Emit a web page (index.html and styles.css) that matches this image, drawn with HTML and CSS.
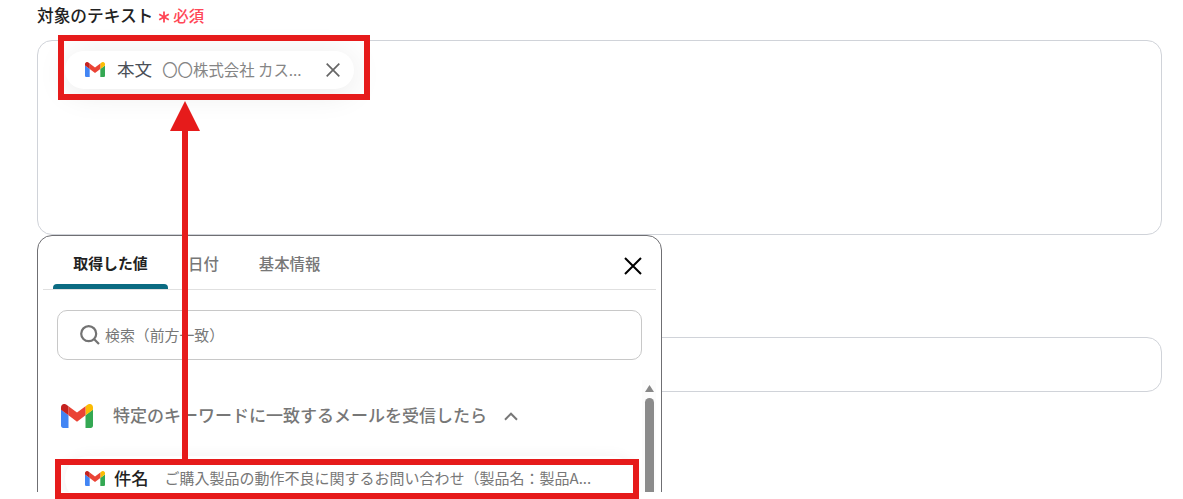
FILE: index.html
```html
<!DOCTYPE html>
<html lang="ja">
<head>
    <meta charset="UTF-8">
    <meta name="viewport" content="width=device-width, initial-scale=1.0">
    <title>対象のテキスト</title>
    <link rel="stylesheet" href="styles.css">
</head>
<body>
    <!-- shared logo -->
    <svg class="defs" width="0" height="0">
        <symbol id="gmail" viewBox="0 0 32 24">
            <path fill="#4285f4" d="M2.2 24H7.5V11.3L0 5.6V21.8C0 23 1 24 2.2 24z"/>
            <path fill="#34a853" d="M24.5 24h5.3c1.2 0 2.2-1 2.2-2.2V5.6l-7.5 5.7z"/>
            <path fill="#fbbc04" d="M24.5 2.2v9.1L32 5.7V3.3c0-2.8-3.3-4.3-5.5-2.6z"/>
            <path fill="#ea4335" d="M7.5 11.3V2.2L16 8.6l8.5-6.4v9.1L16 17.7z"/>
            <path fill="#c5221f" d="M0 3.3v2.4l7.5 5.6V2.2L5.5.7C3.2-1 0 .5 0 3.3z"/>
        </symbol>
    </svg>

    <div class="screen">
        <div class="label">対象のテキスト<svg class="asterisk" viewBox="0 0 12 12"><path d="M6 .5v11M1.2 3.2l9.6 5.6M10.8 3.2L1.2 8.8"/></svg><span class="required">必須</span></div>
        <div class="textarea">
            <div class="chip">
                <svg class="chip-logo"><use href="#gmail"/></svg>
                <span class="chip-name">本文</span>
                <span class="chip-value">〇〇株式会社 カス...</span>
                <svg class="chip-close" viewBox="0 0 14 14"><path d="M.7.7l12.6 12.6M13.3.7L.7 13.3"/></svg>
            </div>
        </div>
        <div class="input"></div>

        <div class="popup">
            <div class="tabs">
                <div class="tab active">取得した値</div>
                <div class="tab date">日付</div>
                <div class="tab">基本情報</div>
                <svg class="popup-close" viewBox="0 0 18 18"><path d="M1 1l16 16M17 1L1 17"/></svg>
            </div>
            <div class="search">
                <svg class="search-icon" viewBox="0 0 20 20"><circle cx="8.7" cy="8.7" r="7.5"/><path d="M14 14l5 5"/></svg>
                <span class="placeholder">検索（前方一致）</span>
            </div>
            <div class="results">
                <div class="list">
                    <div class="group">
                        <svg class="group-logo"><use href="#gmail"/></svg>
                        <span class="group-name">特定のキーワードに一致するメールを受信したら</span>
                        <svg class="chevron" viewBox="0 0 14 9"><path d="M1 7.7l6-6 6 6"/></svg>
                    </div>
                    <div class="item">
                        <svg class="item-logo"><use href="#gmail"/></svg>
                        <span class="item-name">件名</span>
                        <span class="item-value">ご購入製品の動作不良に関するお問い合わせ（製品名：製品A...</span>
                    </div>
                </div>
                <div class="scrollbar">
                    <svg class="scroll-up" viewBox="0 0 9 7"><path d="M4.5 0L9 7H0z"/></svg>
                    <div class="thumb"></div>
                </div>
            </div>
        </div>
    </div>

    <!-- annotations -->
    <div class="mark mark-target"></div>
    <div class="mark mark-source"></div>
    <svg class="arrow" viewBox="0 0 30 360"><path d="M15 0l15 30H18v330h-6V30H0z"/></svg>
</body>
</html>
```

FILE: styles.css
```css
* {
    box-sizing: border-box;
}
body {
    margin: 0;
    height: 499px;
    position: relative;
    overflow: hidden;
    background: #fff;
    font-family: "Noto Sans CJK JP", "Noto Sans", sans-serif;
    font-size: 15.4px;
    color: #222;
    white-space: nowrap;
}
svg {
    display: block;
    flex: none;
    fill: none;
}
.defs {
    position: absolute;
}
.screen {
    position: relative;
    height: 492px;
    padding: 0 21px 0 37px;
    overflow: hidden;
}
.label {
    display: flex;
    align-items: center;
    height: 32px;
    padding-bottom: 2px;
    font-size: 16.7px;
    font-weight: 500;
}
.asterisk {
    width: 12px;
    height: 12px;
    margin: 4px 3px 0 5px;
    stroke: #ff4757;
    stroke-width: 1.8;
}
.required {
    font-size: 15.4px;
    color: #ff4757;
}
.textarea {
    height: 195px;
    margin-top: 8px;
    padding: 10px 27px;
    border: 1px solid #d0d3d9;
    border-radius: 15px;
}
.input {
    height: 55px;
    margin-top: 102px;
    border: 1px solid #d0d3d9;
    border-radius: 15px;
}
.chip {
    display: flex;
    align-items: center;
    width: 289px;
    height: 38px;
    padding: 0 0 3px 20px;
    border-radius: 19px;
    background: #fff;
    box-shadow: 0 4px 32px rgba(0, 0, 0, 0.09);
}
.chip-logo, .item-logo {
    width: 20px;
    height: 15px;
}
.chip-logo {
    margin-top: 1px;
}
.chip-name {
    margin-left: 12px;
    font-size: 17.6px;
    color: #4b5058;
}
.chip-value {
    width: 164px;
    margin-left: 10px;
    color: #858585;
}
.chip-close {
    width: 14px;
    height: 14px;
    margin-top: 3px;
    stroke: #666;
    stroke-width: 1.7;
}

/* value picker */
.popup {
    position: absolute;
    left: 37px;
    top: 235px;
    width: 625px;
    height: 280px;
    padding: 0 5px;
    border: 1px solid #6f6f73;
    border-radius: 15px;
    background: #fff;
}
.tabs {
    display: flex;
    height: 54px;
    padding: 0 14.5px 0 10px;
    border-bottom: 1px solid #e0e0e0;
}
.tab {
    position: relative;
    display: flex;
    align-items: center;
    justify-content: center;
    font-weight: 500;
    color: #777;
}
.tab.active {
    width: 115px;
    color: #222;
    font-size: 14.9px;
    font-weight: 700;
}
.tab.active::after {
    content: "";
    position: absolute;
    left: 0;
    right: 0;
    bottom: 0;
    height: 5px;
    border-radius: 4px 4px 0 0;
    background: #0b6b82;
}
.tab.date {
    margin: 0 40px 0 20px;
}
.popup-close {
    width: 18px;
    height: 18px;
    margin: 20.5px 0 0 auto;
    stroke: #000;
    stroke-width: 2;
}
.search {
    display: flex;
    align-items: center;
    height: 50px;
    margin: 20px 14px 0;
    padding-left: 22px;
    border: 1px solid #c8c8c8;
    border-radius: 10px;
    font-size: 14.9px;
    color: #777;
}
.search-icon {
    width: 20px;
    height: 20px;
    margin-right: 5px;
    stroke: #737373;
    stroke-width: 2.2;
}
.placeholder {
    margin-bottom: 2px;
}
.results {
    display: flex;
    margin-top: 20px;
}
.list {
    width: 599px;
    flex: none;
    padding: 16px 0 0 18px;
}
.group {
    display: flex;
    align-items: center;
    height: 40px;
}
.group-logo {
    width: 32px;
    height: 24px;
}
.group-name {
    margin: 0 0 3px 20px;
    font-size: 17px;
    font-weight: 500;
    color: #777;
}
.chevron {
    width: 14px;
    height: 9px;
    margin-left: 17px;
    stroke: #777;
    stroke-width: 2;
}
.item {
    display: flex;
    align-items: center;
    width: 570px;
    height: 46px;
    margin: 20px 0 0 4px;
    padding: 0 0 3px 20px;
    border-radius: 23px;
    box-shadow: 0 2px 16px rgba(0, 0, 0, 0.07);
}
.item-logo {
    margin-top: 1px;
}
.item-name {
    margin-left: 9px;
    font-size: 17.3px;
    font-weight: 500;
}
.item-value {
    margin-left: 16px;
    font-size: 15px;
    color: #777;
}
.scrollbar {
    flex: none;
    width: 14px;
    padding: 5px 2px 0 3px;
    background: #fcfcfc;
}
.scroll-up {
    width: 9px;
    height: 7px;
    fill: #888;
}
.thumb {
    width: 9px;
    height: 140px;
    margin-top: 6px;
    border-radius: 5px;
    background: #8b8b8b;
}

/* red boxes and arrow */
.mark {
    position: absolute;
    border: 6px solid #e61b1b;
}
.mark-target {
    left: 58px;
    top: 35px;
    width: 312px;
    height: 65px;
}
.mark-source {
    left: 55px;
    top: 459px;
    width: 584px;
    height: 40px;
}
.arrow {
    position: absolute;
    left: 170px;
    top: 101px;
    width: 30px;
    height: 360px;
    fill: #e61b1b;
}
```
